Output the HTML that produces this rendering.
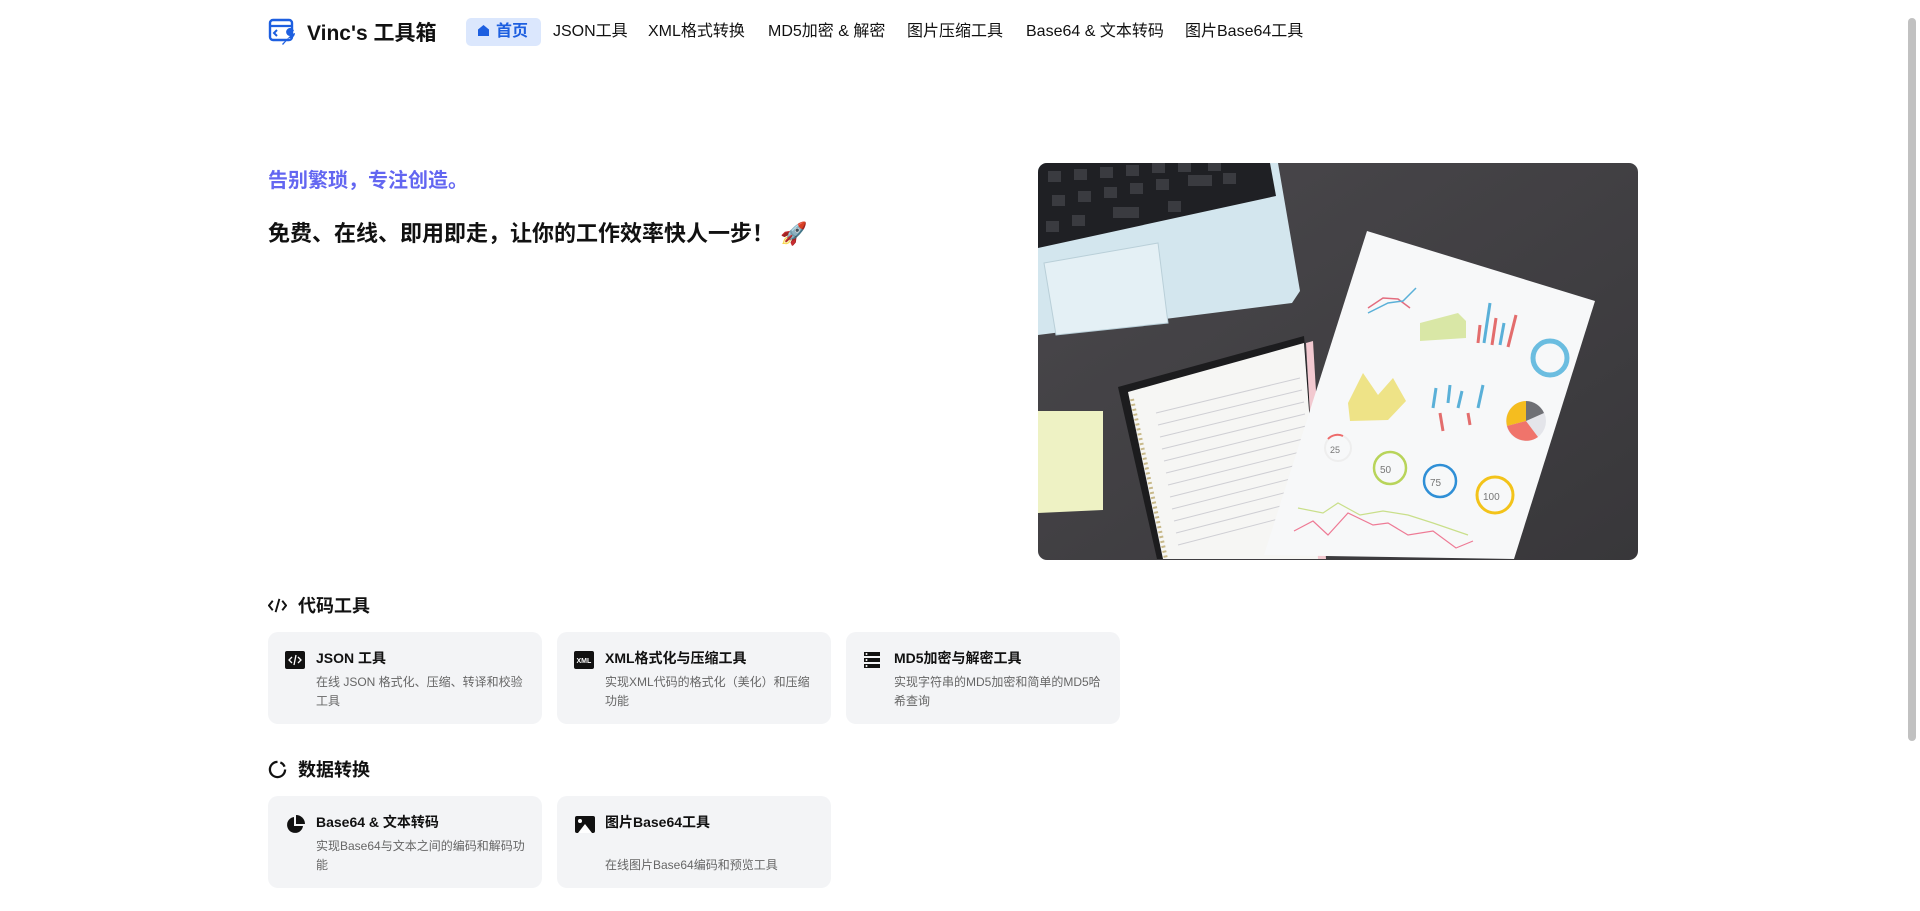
<!DOCTYPE html>
<html><head><meta charset="utf-8">
<style>
*{margin:0;padding:0;box-sizing:border-box}
html,body{width:1920px;height:911px;overflow:hidden;background:#fff;font-family:"Liberation Sans","Noto Sans CJK SC",sans-serif;color:#111}
.nav{position:absolute;top:0;left:0;width:1920px;height:64px}
.logo{position:absolute;left:268px;top:17px;display:flex;align-items:center}
.logo span{font-size:21px;font-weight:bold;margin-left:9px;color:#111}
.nav a{position:absolute;top:18px;height:28px;line-height:28px;font-size:16px;color:#111;text-decoration:none;white-space:nowrap}
.nav a.act{background:#dbe7fd;color:#1d5fe0;font-weight:bold;border-radius:5px;padding:0 9px 0 11px;left:466px;width:75px}
.tag{position:absolute;left:268px;top:164px;font-size:20px;font-weight:bold;color:#6366f1}
.head{position:absolute;left:268px;top:216px;font-size:22px;font-weight:bold}
.hero{position:absolute;left:1038px;top:163px;width:600px;height:397px;border-radius:9px;overflow:hidden}
.sec{position:absolute;left:268px;font-size:18px;font-weight:bold;display:flex;align-items:center}
.sec svg{margin-right:11px}
.card{position:absolute;width:274px;height:92px;background:#f3f4f6;border-radius:10px}
.card .ic{position:absolute;left:17px;top:19px}
.card h4{position:absolute;left:48px;top:16px;font-size:14px;font-weight:bold;color:#111}
.card p{position:absolute;left:48px;top:41px;width:215px;font-size:12px;line-height:19px;color:#666}
.sb{position:absolute;right:4px;top:18px;width:8px;height:723px;background:#c1c1c1;border-radius:4px}
</style></head><body>
<div class="nav">
 <div class="logo">
  <svg width="30" height="30" viewBox="0 0 30 30"><rect x="2" y="3" width="22" height="20" rx="3" fill="none" stroke="#1d5fe0" stroke-width="2.4"/><line x1="2" y1="9" x2="24" y2="9" stroke="#1d5fe0" stroke-width="2.2"/><path d="M9 13l-3 3 3 3" fill="none" stroke="#1d5fe0" stroke-width="2"/><path d="M14 27l8-8a4 4 0 1 1 4-5l-3 1 1 2 3-1a5 5 0 0 1-6 5l-6 7z" fill="#1d5fe0"/></svg>
  <span>Vinc's 工具箱</span>
 </div>
 <a class="act"><svg width="13" height="13" viewBox="0 0 13 13" style="vertical-align:-1px;margin-right:6px"><path d="M6.5 1L1 5.5V12h11V5.5z" fill="#1d5fe0"/></svg>首页</a>
 <a style="left:553px">JSON工具</a>
 <a style="left:648px">XML格式转换</a>
 <a style="left:768px">MD5加密 &amp; 解密</a>
 <a style="left:907px">图片压缩工具</a>
 <a style="left:1026px">Base64 &amp; 文本转码</a>
 <a style="left:1185px">图片Base64工具</a>
</div>
<div class="tag">告别繁琐，专注创造。</div>
<div class="head">免费、在线、即用即走，让你的工作效率快人一步！ 🚀</div>
<div class="hero">
<svg width="600" height="397" viewBox="0 0 600 397">
<defs><linearGradient id="bg" x1="0" y1="0" x2="1" y2="1"><stop offset="0" stop-color="#4a484c"/><stop offset="1" stop-color="#38373a"/></linearGradient></defs>
<rect width="600" height="397" fill="url(#bg)"/>
<polygon points="0,0 240,0 262,128 254,140 0,172" fill="#d3e6ee"/>
<polygon points="0,0 232,0 238,33 0,85" fill="#1f2024"/>
<g fill="#3a3b40"><rect x="10" y="8" width="13" height="11"/><rect x="36" y="6" width="13" height="11"/><rect x="62" y="4" width="13" height="11"/><rect x="88" y="2" width="13" height="11"/><rect x="114" y="0" width="13" height="10"/><rect x="140" y="0" width="13" height="9"/><rect x="170" y="0" width="13" height="8"/><rect x="14" y="32" width="13" height="11"/><rect x="40" y="28" width="13" height="11"/><rect x="66" y="24" width="13" height="11"/><rect x="92" y="20" width="13" height="11"/><rect x="118" y="16" width="13" height="11"/><rect x="150" y="12" width="24" height="11"/><rect x="185" y="10" width="13" height="11"/><rect x="8" y="58" width="13" height="11"/><rect x="34" y="52" width="13" height="11"/><rect x="75" y="44" width="26" height="11"/><rect x="130" y="38" width="13" height="11"/></g>
<polygon points="6,100 120,80 130,160 18,172" fill="#e4f0f5" stroke="#b9cfd8"/>
<polygon points="0,248 65,248 65,347 0,350" fill="#eef2c4"/>
<polygon points="80,224 266,173 285,396 119,396" fill="#1c1c1e"/>
<polygon points="90,229 266,180 282,396 125,396" fill="#f6f6f4"/>
<g stroke="#cfcfd4" stroke-width="1">
<line x1="118" y1="250" x2="262" y2="215"/><line x1="120" y1="262" x2="264" y2="227"/><line x1="122" y1="274" x2="266" y2="239"/><line x1="124" y1="286" x2="267" y2="251"/><line x1="126" y1="298" x2="268" y2="263"/><line x1="128" y1="310" x2="269" y2="275"/><line x1="130" y1="322" x2="270" y2="287"/><line x1="132" y1="334" x2="271" y2="299"/><line x1="134" y1="346" x2="272" y2="311"/><line x1="136" y1="358" x2="273" y2="323"/><line x1="138" y1="370" x2="274" y2="335"/><line x1="140" y1="382" x2="275" y2="347"/></g>
<line x1="94" y1="236" x2="128" y2="396" stroke="#c8b98a" stroke-width="4" stroke-dasharray="2 3"/>
<polygon points="268,180 275,178 288,396 280,396" fill="#f2c9d0"/>
<polygon points="329,68 557,138 476,396 226,392" fill="#f7f8f9"/>
<polyline points="330,145 345,135 360,136 372,145" fill="none" stroke="#e36d7f" stroke-width="1.5"/>
<polyline points="330,150 350,140 365,138 378,125" fill="none" stroke="#5ab0d8" stroke-width="1.5"/>
<polygon points="382,160 420,150 428,158 428,175 382,178" fill="#d9e7a6"/>
<g stroke-width="3"><line x1="440" y1="180" x2="442" y2="162" stroke="#e36d6d"/><line x1="446" y1="180" x2="452" y2="140" stroke="#5ab0d8"/><line x1="454" y1="182" x2="458" y2="155" stroke="#e36d6d"/><line x1="462" y1="182" x2="466" y2="160" stroke="#5ab0d8"/><line x1="470" y1="184" x2="478" y2="152" stroke="#e36d6d"/></g>
<circle cx="512" cy="195" r="17" fill="none" stroke="#6bbde0" stroke-width="5"/>
<polygon points="310,240 325,210 340,232 355,215 368,238 350,257 312,258" fill="#ece07a" opacity=".9"/>
<g stroke-width="3"><line x1="395" y1="245" x2="398" y2="225" stroke="#5ab0d8"/><line x1="402" y1="250" x2="405" y2="268" stroke="#e36d6d"/><line x1="410" y1="240" x2="412" y2="222" stroke="#5ab0d8"/><line x1="420" y1="245" x2="424" y2="228" stroke="#5ab0d8"/><line x1="430" y1="250" x2="432" y2="262" stroke="#e36d6d"/><line x1="440" y1="245" x2="445" y2="222" stroke="#5ab0d8"/></g>
<circle cx="488" cy="258" r="20" fill="#e4e5ea"/><path d="M488 258 L488 238 A20 20 0 0 0 469 263 Z" fill="#f5bd1f"/><path d="M488 258 L469 263 A20 20 0 0 0 500 274 Z" fill="#f0746b"/><path d="M488 258 L488 238 A20 20 0 0 1 506 250 Z" fill="#6f7075"/>
<circle cx="300" cy="285" r="13" fill="none" stroke="#eee" stroke-width="2"/><path d="M290 276 A13 13 0 0 1 305 273" fill="none" stroke="#ee6b6b" stroke-width="2"/>
<circle cx="352" cy="305" r="16" fill="none" stroke="#b8d45a" stroke-width="2.5"/>
<circle cx="402" cy="318" r="16" fill="none" stroke="#2f8fd6" stroke-width="2.5"/>
<circle cx="457" cy="332" r="18" fill="none" stroke="#f3c31a" stroke-width="3"/>
<text x="342" y="310" font-size="10" fill="#777" font-family="Liberation Sans">50</text><text x="392" y="323" font-size="10" fill="#777" font-family="Liberation Sans">75</text><text x="445" y="337" font-size="10" fill="#777" font-family="Liberation Sans">100</text><text x="292" y="290" font-size="9" fill="#777" font-family="Liberation Sans">25</text>
<polyline points="256,368 275,358 290,372 310,350 335,362 350,360 370,372 395,368 418,385 435,378" fill="none" stroke="#ee7a95" stroke-width="1.2"/>
<polyline points="260,345 285,350 300,340 322,352 345,348 370,352 395,360 430,372" fill="none" stroke="#c9df8a" stroke-width="1.2"/>
</svg>
</div>
<div class="sec" style="top:592px"><svg width="19" height="19" viewBox="0 0 20 20"><path d="M5 5L1 10l4 5M15 5l4 5-4 5M12 3L8 17" fill="none" stroke="#111" stroke-width="2"/></svg>代码工具</div>
<div class="card" style="left:268px;top:632px"><svg class="ic" width="20" height="18" viewBox="0 0 20 18"><rect width="20" height="18" rx="2" fill="#111"/><path d="M7 6l-3 3 3 3M13 6l3 3-3 3M11 4L9 14" stroke="#fff" stroke-width="1.3" fill="none"/></svg><h4>JSON 工具</h4><p>在线 JSON 格式化、压缩、转译和校验工具</p></div>
<div class="card" style="left:557px;top:632px"><svg class="ic" width="20" height="18" viewBox="0 0 20 18"><rect width="20" height="18" rx="2" fill="#111"/><text x="2.5" y="12" font-size="7" fill="#fff" font-family="Liberation Sans" font-weight="bold">XML</text></svg><h4>XML格式化与压缩工具</h4><p>实现XML代码的格式化（美化）和压缩功能</p></div>
<div class="card" style="left:846px;top:632px"><svg class="ic" width="18" height="18" viewBox="0 0 18 18"><rect x="1" y="1" width="16" height="4" fill="#111"/><rect x="1" y="7" width="16" height="4" fill="#111"/><rect x="1" y="13" width="16" height="4" fill="#111"/><circle cx="3.5" cy="3" r="1" fill="#fff"/><circle cx="3.5" cy="9" r="1" fill="#fff"/><circle cx="3.5" cy="15" r="1" fill="#fff"/></svg><h4>MD5加密与解密工具</h4><p>实现字符串的MD5加密和简单的MD5哈希查询</p></div>
<div class="sec" style="top:756px"><svg width="19" height="19" viewBox="0 0 20 20"><path d="M10 2a8 8 0 1 0 8 8" fill="none" stroke="#111" stroke-width="2.4"/><path d="M13 2.6a8 8 0 0 1 4.4 4.4" fill="none" stroke="#111" stroke-width="2.4"/></svg>数据转换</div>
<div class="card" style="left:268px;top:796px"><svg class="ic" width="20" height="20" viewBox="0 0 20 20"><path d="M9 2a8 8 0 1 0 9 9H9z" fill="#111"/><path d="M11 0a9 9 0 0 1 9 9h-9z" fill="#111"/></svg><h4>Base64 &amp; 文本转码</h4><p>实现Base64与文本之间的编码和解码功能</p></div>
<div class="card" style="left:557px;top:796px"><svg class="ic" width="22" height="20" viewBox="0 0 22 20"><rect x="1" y="1" width="20" height="17" rx="2" fill="#111"/><circle cx="6" cy="6" r="2" fill="#fff"/><path d="M4 18l7-9 7 9" fill="#fff"/></svg><h4>图片Base64工具</h4><p style="top:60px">在线图片Base64编码和预览工具</p></div>
<div class="sb"></div>
</body></html>
